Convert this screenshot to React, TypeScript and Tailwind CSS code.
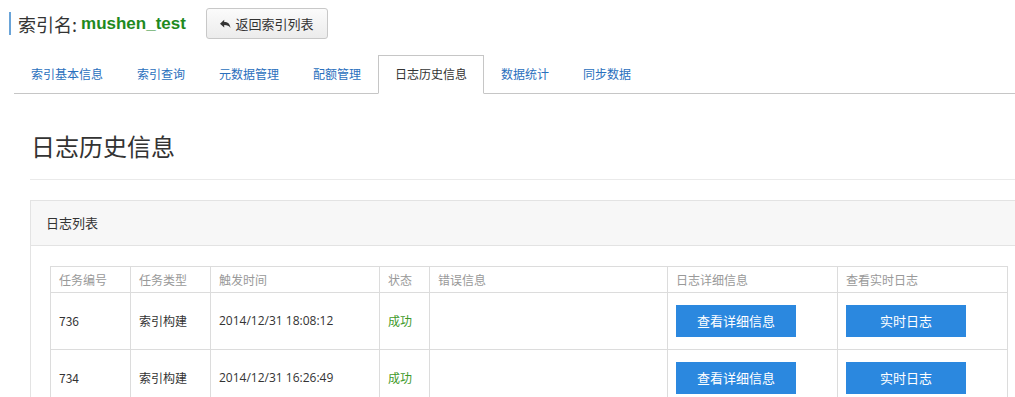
const tabs = ["索引基本信息", "索引查询", "元数据管理", "配额管理", "日志历史信息", "数据统计", "同步数据"];
const activeTab = "日志历史信息";

const logs = [
  { id: "736", type: "索引构建", time: "2014/12/31 18:08:12", status: "成功", error: "" },
  { id: "734", type: "索引构建", time: "2014/12/31 16:26:49", status: "成功", error: "" },
];

const columns = [
  { label: "任务编号", width: "w-[80px]" },
  { label: "任务类型", width: "w-[80px]" },
  { label: "触发时间", width: "w-[169px]" },
  { label: "状态", width: "w-[50px]" },
  { label: "错误信息", width: "w-[238px]" },
  { label: "日志详细信息", width: "w-[170px]" },
  { label: "查看实时日志", width: "w-[170px]" },
];

function ReplyIcon() {
  return (
    <svg viewBox="0 0 12 10" className="h-[10px] w-[11px] fill-[#333]">
      <path d="M0 4.6 L4.6 0.4 V2.9 C8.4 2.9 11 4.6 11.4 9.4 C10 6.8 8 6 4.6 6 V8.7 Z" />
    </svg>
  );
}

export default function App() {
  return (
    <div className="w-[1015px] h-[397px] overflow-hidden bg-white font-['Noto_Sans_CJK_SC',sans-serif] text-[#333]">
      <div className="w-[1040px]">
        {/* header */}
        <div className="flex items-center pl-[9px] pt-[8px]">
          <div className="flex h-[23px] items-center border-l-2 border-[#6aa4d8] pl-[7px]">
            <span className="text-[18px] leading-none text-[#333]">索引名:</span>
            <span className="ml-[4px] font-['Liberation_Sans',sans-serif] text-[17px] font-bold leading-none text-[#1f8a1f]">
              mushen_test
            </span>
          </div>
          <button className="ml-[20px] flex h-[31px] w-[122px] items-center justify-center gap-[4px] rounded-[3px] border border-[#c8c8c8] bg-gradient-to-b from-[#fbfbfb] to-[#ececec] text-[13px] text-[#333]">
            <ReplyIcon />
            返回索引列表
          </button>
        </div>

        {/* tabs */}
        <ul className="ml-[14px] mt-[16px] flex border-b border-[#c6c6c6]">
          {tabs.map((tab) => {
            const active = tab === activeTab;
            return (
              <li
                key={tab}
                className={
                  active
                    ? "-mb-px border border-[#c6c6c6] border-b-white bg-white px-4 pb-[11px] pt-[10px] text-[12px] leading-[15px] text-[#333]"
                    : "border border-transparent px-4 pb-[11px] pt-[10px] text-[12px] leading-[15px] text-[#2a6fbd]"
                }
              >
                {tab}
              </li>
            );
          })}
        </ul>

        <div className="pl-[30px]">
          <h1 className="ml-px mt-[35px] text-[24px] leading-[34px] text-[#333]">日志历史信息</h1>
          <div className="mt-[16px] border-t border-[#eaeaea]" />

          {/* panel */}
          <div className="mt-[20px] w-[998px] border border-[#e3e3e3]">
            <div className="flex h-[45px] items-center border-b border-[#e3e3e3] bg-[#f7f7f7] pl-[15px] text-[13px]">
              日志列表
            </div>
            <div className="px-[19px] pt-[20px]">
              <table className="w-[958px] table-fixed border-collapse text-[12px]">
                <thead>
                  <tr className="h-[26px]">
                    {columns.map((col) => (
                      <th
                        key={col.label}
                        className={`${col.width} border border-[#dcdcdc] px-2 text-left font-normal text-[#999]`}
                      >
                        {col.label}
                      </th>
                    ))}
                  </tr>
                </thead>
                <tbody>
                  {logs.map((log) => (
                    <tr key={log.id} className="h-[57px]">
                      <td className="border border-[#dcdcdc] px-2">{log.id}</td>
                      <td className="border border-[#dcdcdc] px-2">{log.type}</td>
                      <td className="border border-[#dcdcdc] px-2 font-['Open_Sans',sans-serif]">{log.time}</td>
                      <td className="border border-[#dcdcdc] px-2 text-[#3f9a2b]">{log.status}</td>
                      <td className="border border-[#dcdcdc] px-2">{log.error}</td>
                      <td className="border border-[#dcdcdc] px-2">
                        <button className="h-[32px] w-[120px] bg-[#2b88df] text-[13px] text-white">查看详细信息</button>
                      </td>
                      <td className="border border-[#dcdcdc] px-2">
                        <button className="h-[32px] w-[120px] bg-[#2b88df] text-[13px] text-white">实时日志</button>
                      </td>
                    </tr>
                  ))}
                </tbody>
              </table>
            </div>
          </div>
        </div>
      </div>
    </div>
  );
}
